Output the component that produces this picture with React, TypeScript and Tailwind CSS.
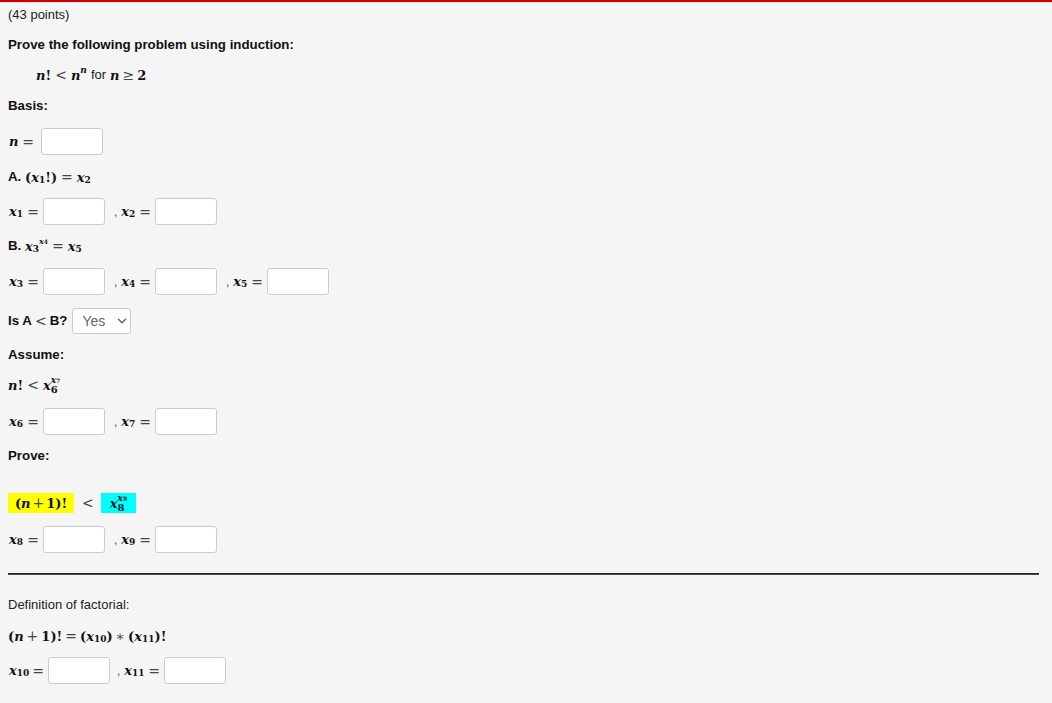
import type { ReactNode } from "react";
import { ChevronDown } from "lucide-react";

const math = "font-['DejaVu_Serif',serif] font-bold text-[#111]";

function V({ children }: { children: ReactNode }) {
    return <i className={`${math} text-[13px] leading-none`}>{children}</i>;
}

function R({ children }: { children: ReactNode }) {
    return <span className={`${math} text-[13px] leading-none`}>{children}</span>;
}

function Sub({ children }: { children: ReactNode }) {
    return <span className={`${math} text-[9px] leading-none relative top-[3px]`}>{children}</span>;
}

function Sup({ children }: { children: ReactNode }) {
    return <i className={`${math} text-[9px] leading-none relative -top-[5px]`}>{children}</i>;
}

function Op({ children, className = "" }: { children: ReactNode; className?: string }) {
    return <span className={`font-['DejaVu_Serif',serif] text-[14px] leading-none text-[#444] font-normal ${className}`}>{children}</span>;
}

function Box() {
    return <input type="text" className="w-[62px] h-[27px] bg-white border border-[#ccc] rounded-[3px]" />;
}

// superscript and subscript stacked after a base variable
function Stack({ top, topIdx, bottom }: { top: string; topIdx: string; bottom: string }) {
    return (
        <span className="inline-flex flex-col items-start leading-none">
            <span className="flex items-baseline h-[9px]">
                <i className={`${math} text-[9px] leading-[9px]`}>{top}</i>
                <span className={`${math} text-[6px] leading-[9px]`}>{topIdx}</span>
            </span>
            <span className={`${math} text-[10px] leading-[10px]`}>{bottom}</span>
        </span>
    );
}

function Field({ idx, first = false, wide = false }: { idx: string; first?: boolean; wide?: boolean }) {
    const width = first ? (wide ? "w-[40px]" : "w-[35px]") : wide ? "w-[54px] pl-[7px]" : "w-[50px] pl-[9px]";
    return (
        <span className="flex items-center">
            <span className={`flex items-center pr-[4px] ${width}`}>
                {!first && <span className="text-[#555] text-[12px] mr-[3px]">,</span>}
                <span className="flex items-center ml-px">
                    <V>x</V>
                    <Sub>{idx}</Sub>
                </span>
                <Op className="ml-auto">=</Op>
            </span>
            <Box />
        </span>
    );
}

function InputRow({ ids, wide = false, className }: { ids: string[]; wide?: boolean; className: string }) {
    return (
        <div className={`flex items-center h-[27px] ${className}`}>
            {ids.map((id, i) => (
                <Field key={id} idx={id} first={i === 0} wide={wide} />
            ))}
        </div>
    );
}

function Label({ children, className }: { children: ReactNode; className: string }) {
    return <div className={`h-[20px] leading-[20px] font-bold text-[13.3px] text-[#111] ${className}`}>{children}</div>;
}

export default function App() {
    return (
        <div className="h-[703px] w-[1052px] overflow-hidden bg-[#f5f5f5] font-['Liberation_Sans',sans-serif] text-[#222]">
            <div className="h-[2px] bg-[#cc0000]" />
            <div className="h-px bg-[#e2e2e2]" />
            <div className="px-2">
                <div className="h-[20px] mt-[2px] leading-[20px] text-[13px]">(43 points)</div>
                <Label className="mt-[10px]">Prove the following problem using induction:</Label>

                <div className="h-[20px] mt-[10px] ml-[28px] flex items-center">
                    <V>n</V>
                    <R>!</R>
                    <Op className="mx-[4px]">&lt;</Op>
                    <V>n</V>
                    <Sup>n</Sup>
                    <span className="text-[13px] mx-[4px]">for</span>
                    <V>n</V>
                    <Op className="mx-[3px]">≥</Op>
                    <R>2</R>
                </div>

                <Label className="mt-[11px]">Basis:</Label>

                <div className="flex items-center h-[27px] mt-[12px]">
                    <span className="flex items-center justify-between w-[33px] pl-px pr-[7px]">
                        <V>n</V>
                        <Op>=</Op>
                    </span>
                    <Box />
                </div>

                <Label className="mt-[12px] flex items-center">
                    A.&nbsp;
                    <R>(</R>
                    <V>x</V>
                    <Sub>1</Sub>
                    <R>!)</R>
                    <Op className="mx-[4px]">=</Op>
                    <V>x</V>
                    <Sub>2</Sub>
                </Label>

                <InputRow ids={["1", "2"]} className="mt-[11px]" />

                <Label className="mt-[11px] flex items-center">
                    B.&nbsp;
                    <V>x</V>
                    <Sub>3</Sub>
                    <span className="flex items-baseline relative -top-[5px]">
                        <i className={`${math} text-[8px] leading-none`}>x</i>
                        <span className={`${math} text-[6px] leading-none`}>4</span>
                    </span>
                    <Op className="mx-[4px]">=</Op>
                    <V>x</V>
                    <Sub>5</Sub>
                </Label>

                <InputRow ids={["3", "4", "5"]} className="mt-[12px]" />

                <div className="flex items-center h-[26px] mt-[13px]">
                    <span className="font-bold text-[13.3px] text-[#111] flex items-center">
                        Is A <Op className="mx-[3px]">&lt;</Op> B?
                    </span>
                    <span className="relative ml-[5px]">
                        <select defaultValue="Yes" className="block appearance-none w-[59px] h-[26px] pl-[9px] bg-white border border-[#ccc] rounded-[3px] text-[14px] text-[#666]">
                            <option>Yes</option>
                            <option>No</option>
                        </select>
                        <ChevronDown className="absolute right-[2px] top-[6px] size-[14px] text-[#666] pointer-events-none" strokeWidth={2.5} />
                    </span>
                </div>

                <Label className="mt-[11px]">Assume:</Label>

                <div className="h-[20px] mt-[10px] flex items-center">
                    <V>n</V>
                    <R>!</R>
                    <Op className="mx-[4px]">&lt;</Op>
                    <V>x</V>
                    <Stack top="x" topIdx="7" bottom="6" />
                </div>

                <InputRow ids={["6", "7"]} className="mt-[13px]" />

                <Label className="mt-[11px]">Prove:</Label>

                <div className="h-[20px] mt-[27px] flex items-center">
                    <span className="h-[20px] w-[66px] bg-[#ffff00] flex items-center justify-center">
                        <R>(</R>
                        <V>n</V>
                        <Op className="mx-[2px]">+</Op>
                        <R>1)!</R>
                    </span>
                    <Op className="mx-[8px] w-[11px]">&lt;</Op>
                    <span className="h-[20px] w-[35px] bg-[#00ffff] flex items-center justify-center">
                        <V>x</V>
                        <Stack top="x" topIdx="9" bottom="8" />
                    </span>
                </div>

                <InputRow ids={["8", "9"]} className="mt-[13px]" />

                <hr className="w-[1031px] mt-[20px] border-t-0 h-[2px] bg-gradient-to-b from-[#111] to-[#666]" />

                <div className="h-[20px] mt-[20px] leading-[20px] text-[13px]">Definition of factorial:</div>

                <div className="h-[20px] mt-[11px] flex items-center">
                    <R>(</R>
                    <V>n</V>
                    <Op className="mx-[3px]">+</Op>
                    <R>1)!</R>
                    <Op className="mx-[3px]">=</Op>
                    <R>(</R>
                    <V>x</V>
                    <Sub>10</Sub>
                    <R>)</R>
                    <Op className="mx-[3px]">∗</Op>
                    <R>(</R>
                    <V>x</V>
                    <Sub>11</Sub>
                    <R>)!</R>
                </div>

                <InputRow ids={["10", "11"]} wide className="mt-[11px]" />
            </div>
        </div>
    );
}
